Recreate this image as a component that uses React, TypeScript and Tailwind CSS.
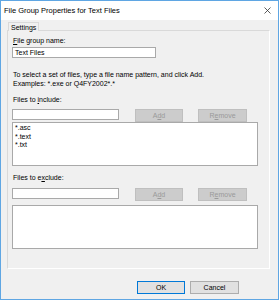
function Btn({
  children,
  disabled,
  primary,
  className = "",
}: {
  children: React.ReactNode;
  disabled?: boolean;
  primary?: boolean;
  className?: string;
}) {
  const base = "h-[13px] flex items-center justify-center border text-[7px] leading-none";
  const look = disabled
    ? "bg-[#cccccc] border-[#bfbfbf] text-[#9a9a9a]"
    : primary
    ? "bg-[#e1e1e1] border-[#0078d7] text-black"
    : "bg-[#e1e1e1] border-[#adadad] text-black";
  return <div className={`${base} ${look} ${className}`}>{children}</div>;
}

function App() {
  return (
    <div className="w-[279px] h-[300px] flex flex-col border border-[#5fa6e3] bg-[#f0f0f0] font-['Liberation_Sans',Arial,sans-serif] text-[7px] text-black">
      {/* title bar */}
      <div className="h-[19px] shrink-0 bg-white flex items-center justify-between pl-[3px] pr-[7px]">
        <span className="text-[7.5px] leading-none">File Group Properties for Text Files</span>
        <svg width="7" height="7" viewBox="0 0 7 7" className="text-[#333]">
          <path d="M0.5 0.5 L6.5 6.5 M6.5 0.5 L0.5 6.5" stroke="currentColor" strokeWidth="0.8" />
        </svg>
      </div>

      {/* tabs */}
      <div className="pl-[6px] pt-[2px] flex flex-col">
        <div className="flex pl-[1px]">
          <div className="relative z-10 -mb-[1px] h-[9px] px-[2px] flex items-center border border-b-0 border-[#d9d9d9] bg-[#f0f0f0] leading-none">
            Settings
          </div>
        </div>
        <div className="w-[263px] h-[239px] border border-[#d9d9d9] border-r-white border-b-white flex flex-col pl-[4px]">
          <div className="mt-[5px] h-[9px] leading-[9px] pl-[1px]">
            <span className="underline">F</span>ile group name:
          </div>
          <div className="mt-[2px] w-[144px] h-[11px] bg-white border border-[#a9a9a9] flex items-center pl-[2px] leading-none">
            Text Files
          </div>

          <div className="mt-[12px] h-[9px] leading-[9px] pl-[1px]">
            To select a set of files, type a file name pattern, and click Add.
          </div>
          <div className="h-[9px] leading-[9px] pl-[1px]">Examples: *.exe or Q4FY2002*.*</div>

          <div className="mt-[7px] h-[9px] leading-[9px] pl-[1px]">
            Files to <span className="underline">i</span>nclude:
          </div>
          <div className="mt-[5px] flex items-start">
            <div className="w-[107px] h-[11px] bg-white border border-[#a9a9a9]" />
            <Btn disabled className="ml-[16px] w-[48px]">
              A<span className="underline">d</span>d
            </Btn>
            <Btn disabled className="ml-[15px] w-[49px]">
              R<span className="underline">e</span>move
            </Btn>
          </div>
          <div className="mt-[0px] w-[246px] h-[44px] bg-white border border-[#a9a9a9] pl-[2px] pt-[1px] leading-[8.5px]">
            <div>*.asc</div>
            <div>*.text</div>
            <div>*.txt</div>
          </div>

          <div className="mt-[7px] h-[9px] leading-[9px] pl-[1px]">
            Files to e<span className="underline">x</span>clude:
          </div>
          <div className="mt-[6px] flex items-start">
            <div className="w-[107px] h-[11px] bg-white border border-[#a9a9a9]" />
            <Btn disabled className="ml-[16px] w-[48px]">
              A<span className="underline">d</span>d
            </Btn>
            <Btn disabled className="ml-[15px] w-[49px]">
              R<span className="underline">e</span>move
            </Btn>
          </div>
          <div className="mt-[4px] w-[246px] h-[44px] bg-white border border-[#a9a9a9]" />
        </div>
      </div>

      {/* footer buttons */}
      <div className="mt-[12px] flex pl-[136px] gap-[5px]">
        <Btn primary className="w-[48px]">OK</Btn>
        <Btn className="w-[49px]">Cancel</Btn>
      </div>
    </div>
  );
}

export default App;
